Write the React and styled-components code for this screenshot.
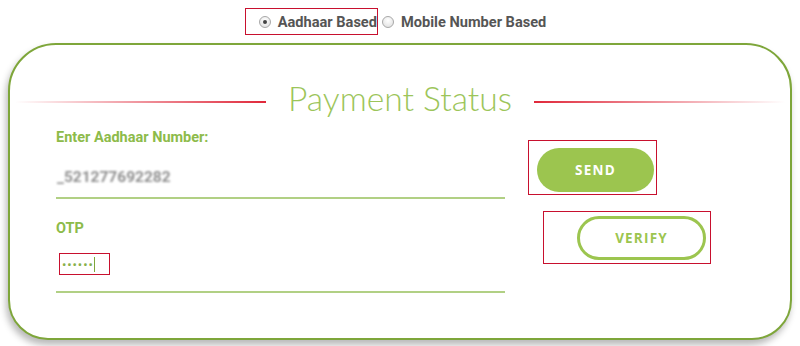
import React from 'react'
import styled, { createGlobalStyle } from 'styled-components'

const GlobalStyle = createGlobalStyle`
  html, body {
    margin: 0;
    padding: 0;
    background: #ffffff;
  }
  body {
    font-family: Roboto, "Liberation Sans", sans-serif;
  }
`

const App = () => {
  return (
    <Page>
      <GlobalStyle />

      <RadioRow>
        <Marked pad="0 0 0 13px">
          <RadioOption>
            <RadioDot checked />
            Aadhaar Based
          </RadioOption>
        </Marked>
        <RadioOption>
          <RadioDot />
          Mobile Number Based
        </RadioOption>
      </RadioRow>

      <Card>
        <TitleRow>
          <TitleLine dir="left" />
          <Title>Payment Status</Title>
          <TitleLine dir="right" />
        </TitleRow>

        <Body>
          <FormColumn>
            <Label>Enter Aadhaar Number:</Label>
            <Field height={35} pad={8}>
              <Masked>_521277692282</Masked>
            </Field>

            <Label top={21}>OTP</Label>
            <Field top={16} height={40} pad={2}>
              <Marked pad="0 14px 0 2px" h={22} left={3}>
                <Dots>••••••</Dots>
                <Caret />
              </Marked>
            </Field>
          </FormColumn>

          <ButtonColumn>
            <Marked pad="7px 2px 2px 8px">
              <SendButton>SEND</SendButton>
            </Marked>
            <Marked pad="4px 4px 3px 33px" left={15} top={16}>
              <VerifyButton>VERIFY</VerifyButton>
            </Marked>
          </ButtonColumn>
        </Body>
      </Card>
    </Page>
  )
}

export default App

const Page = styled.div`
  width: 800px;
  height: 346px;
  overflow: hidden;
  background: #ffffff;
`

const RadioRow = styled.div`
  display: flex;
  justify-content: center;
  align-items: center;
  gap: 4px;
  padding: 8px 9px 0 0;
  height: 27px;
`

const Marked = styled.div`
  display: inline-flex;
  align-items: center;
  border: 1px solid #c8102e;
  padding: ${p => p.pad || '0'};
  height: ${p => (p.h ? `${p.h}px` : 'auto')};
  box-sizing: border-box;
  margin-left: ${p => p.left || 0}px;
  margin-top: ${p => p.top || 0}px;
  align-self: flex-start;
`

const RadioOption = styled.label`
  display: inline-flex;
  align-items: center;
  gap: 7px;
  height: 25px;
  font-size: 14.6px;
  font-weight: 700;
  color: #555555;
`

const RadioDot = styled.span`
  width: 12px;
  height: 12px;
  border-radius: 50%;
  box-sizing: border-box;
  border: 1px solid #a8a8a8;
  background: radial-gradient(circle at 50% 35%, #ffffff 0%, #dcdcdc 100%);
  display: inline-flex;
  align-items: center;
  justify-content: center;

  &::after {
    content: '';
    width: 4px;
    height: 4px;
    border-radius: 50%;
    background: ${p => (p.checked ? '#444444' : 'transparent')};
  }
`

const Card = styled.div`
  margin: 8px 8px 0 8px;
  height: 297px;
  box-sizing: border-box;
  border: 2px solid #7ea63a;
  border-radius: 48px 46px 40px 40px;
  background: #ffffff;
  box-shadow: -2px 5px 7px rgba(0, 0, 0, 0.28);
  padding-top: 33px;
`

const TitleRow = styled.div`
  display: flex;
  align-items: center;
  gap: 22px;
  padding: 0 5px;
  height: 40px;
`

const TitleLine = styled.div`
  flex: 1;
  height: 2px;
  margin-top: 8px;
  background: ${p =>
    p.dir === 'left'
      ? 'linear-gradient(to right, rgba(224, 40, 58, 0), #e0283a)'
      : 'linear-gradient(to right, #e0283a, rgba(224, 40, 58, 0))'};
`

const Title = styled.h1`
  margin: 0;
  font-family: Lato, "Open Sans", sans-serif;
  font-weight: 300;
  font-size: 33.6px;
  color: #9cc55a;
  line-height: 40px;
  white-space: nowrap;
`

const Body = styled.div`
  display: grid;
  grid-template-columns: 449px auto;
  column-gap: 23px;
  padding: 11px 0 0 46px;
`

const FormColumn = styled.div`
  display: flex;
  flex-direction: column;
`

const Label = styled.div`
  font-size: 14.5px;
  line-height: 17px;
  font-weight: 700;
  color: #8dbb4a;
  margin-top: ${p => p.top || 0}px;
`

const Field = styled.div`
  margin-top: ${p => p.top || 18}px;
  height: ${p => p.height || 38}px;
  box-sizing: border-box;
  padding-bottom: ${p => p.pad || 0}px;
  display: flex;
  align-items: center;
  border-bottom: 2px solid #b1d084;
`

const Masked = styled.span`
  font-size: 15.5px;
  font-weight: 700;
  color: #8f8f8f;
  filter: blur(1.3px);
  padding-left: 1px;
`

const Dots = styled.span`
  font-size: 13px;
  letter-spacing: 0.9px;
  color: #88b04a;
`

const Caret = styled.span`
  width: 1px;
  height: 15px;
  background: #7ea63a;
  margin-left: 0;
`

const ButtonColumn = styled.div`
  display: flex;
  flex-direction: column;
  padding-top: 11px;
`

const PillBase = styled.button`
  height: 44px;
  border-radius: 22px;
  box-sizing: border-box;
  font-family: "Open Sans", "Liberation Sans", sans-serif;
  font-weight: 700;
  font-size: 13.5px;
  letter-spacing: 1.2px;
  cursor: pointer;
`

const SendButton = styled(PillBase)`
  width: 117px;
  border: none;
  background: #9cc54f;
  color: #ffffff;
`

const VerifyButton = styled(PillBase)`
  width: 129px;
  border: 3px solid #9cc54f;
  background: #ffffff;
  color: #9cc54f;
`
